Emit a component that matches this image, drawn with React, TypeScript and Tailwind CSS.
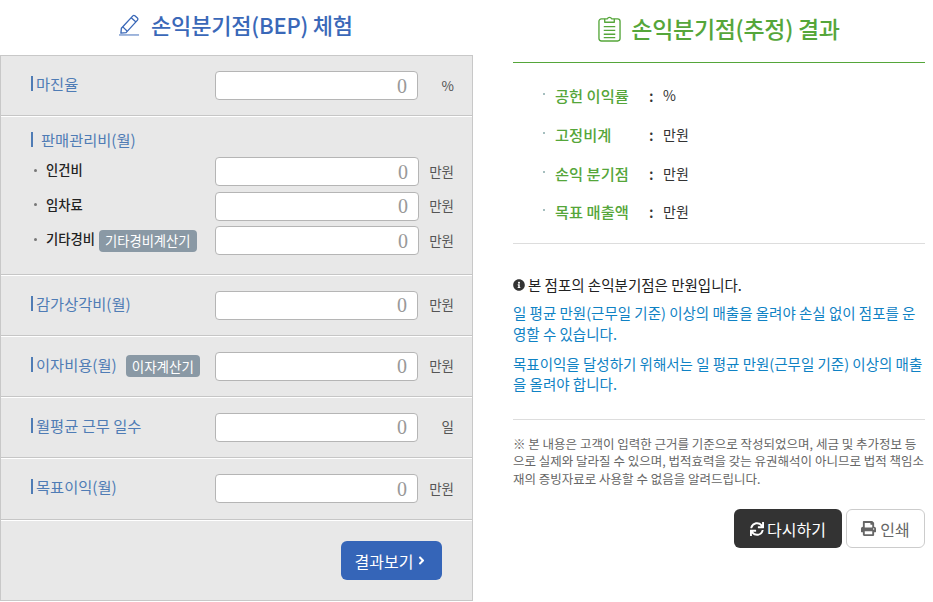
import { FaInfoCircle, FaPrint, FaSync, FaAngleRight } from "react-icons/fa";

const font = "font-['Noto_Sans_CJK_KR','Noto_Sans',sans-serif]";

function Amount({ unit, wide }: { unit: string; wide?: boolean }) {
  return (
    <div className="flex items-center">
      <div
        className={
          "flex h-[29px] items-center justify-end rounded-[4px] border border-[#b5b5b5] bg-white pr-[10px] font-['Liberation_Serif',serif] text-[20px] text-[#999] " +
          (wide ? "w-[204px]" : "w-[203px]")
        }
      >
        0
      </div>
      <span className="ml-auto text-[13.5px] leading-none text-[#555]">{unit}</span>
    </div>
  );
}

function SectionRow({
  label,
  unit,
  button,
  last,
  height,
}: {
  label: string;
  unit: string;
  button?: string;
  last?: boolean;
  height: string;
}) {
  return (
    <div
      className={
        "flex items-center pl-[30px] pr-[18px] " +
        height +
        (last ? "" : " border-b border-b-[#c6c6c6] shadow-[0_1px_0_#fff]")
      }
    >
      <div className="flex w-[184px] items-center">
        <span className="mb-[4px] flex items-center border-l-2 border-[#4f7cb5] pl-[3px] text-[15.3px] leading-[15px] text-[#4f7cb5]">
          {label}
        </span>
        {button && (
          <span className="ml-[9px] rounded-[4px] bg-[#8a99a5] px-[6px] py-[2px] text-[13.5px] leading-[18px] text-white">
            {button}
          </span>
        )}
      </div>
      <div className="flex-1">
        <Amount unit={unit} />
      </div>
    </div>
  );
}

function SubRow({ label, button }: { label: string; button?: string }) {
  return (
    <div className="flex items-center">
      <div className="flex w-[184px] items-center pl-[3px]">
        <span className="mb-[3px] mr-[9px] h-[3px] w-[3px] rounded-full bg-[#777]" />
        <span className="mb-[3px] text-[13.3px] font-medium leading-[18px] text-[#222]">{label}</span>
        {button && (
          <span className="ml-[4px] rounded-[4px] bg-[#8a99a5] px-[6px] py-[1px] text-[13.3px] leading-[20px] text-white">
            {button}
          </span>
        )}
      </div>
      <div className="flex-1">
        <Amount unit="만원" wide />
      </div>
    </div>
  );
}

function ResultRow({ label, value }: { label: string; value: string }) {
  return (
    <div className="flex h-[38.7px] items-center text-[15.3px]">
      <span className="mb-[3px] mr-[10px] h-[2px] w-[2px] rounded-full bg-[#8aa]" />
      <span className="w-[94px] font-medium text-[#55a63a]">{label}</span>
      <span className="w-[14px] font-medium text-[#333]">:</span>
      <span className="text-[14px] text-[#333]">{value}</span>
    </div>
  );
}

export default function App() {
  return (
    <div className={"flex h-[602px] w-[933px] overflow-hidden bg-white " + font}>
      {/* input form */}
      <div className="w-[473px] shrink-0">
        <h2 className="flex h-[55px] items-center justify-center gap-[11px] pb-[7px] pr-[1px] text-[22px] font-medium tracking-[-0.2px] text-[#3a68b8]">
          <svg viewBox="0 0 22 24" className="h-[24px] w-[21px]" fill="none" stroke="currentColor" strokeWidth="1.4" strokeLinejoin="round">
            <path d="M2.5 16.5 14.5 3.5a1.5 1.5 0 0 1 2.1-.1l2.7 2.4a1.5 1.5 0 0 1 .1 2.1L7.4 21 2 21.500z" />
            <path d="M12.8 5.4l5 4.5M4 15l4.4 4.3" />
            <path d="M0 23.5h21" strokeWidth="1" />
          </svg>
          <span>손익분기점(BEP) 체험</span>
        </h2>
        <div className="h-[546px] border border-[#c8c8c8] bg-[#e8e8e8]">
          <SectionRow label="마진율" unit="%" height="h-[60px]" />
          <div className="h-[159px] border-b border-b-[#c6c6c6] pl-[30px] pr-[18px] pt-[16px] shadow-[0_1px_0_#fff]">
            <div className="mb-[10px] flex h-[15px] items-center border-l-2 border-[#4f7cb5] pl-[8px] text-[15.3px] leading-[15px] text-[#4f7cb5]">
              판매관리비(월)
            </div>
            <div className="flex flex-col gap-[5.5px]">
              <SubRow label="인건비" />
              <SubRow label="임차료" />
              <SubRow label="기타경비" button="기타경비계산기" />
            </div>
          </div>
          <SectionRow label="감가상각비(월)" unit="만원" height="h-[61px]" />
          <SectionRow label="이자비용(월)" unit="만원" button="이자계산기" height="h-[61px]" />
          <SectionRow label="월평균 근무 일수" unit="일" height="h-[61px]" />
          <SectionRow label="목표이익(월)" unit="만원" height="h-[62px]" />
          <div className="flex justify-end pr-[30px] pt-[21px]">
            <button className="flex h-[39px] w-[101px] items-center justify-center gap-[2px] rounded-[6px] bg-[#3565b8] text-[16px] text-white">
              결과보기
              <FaAngleRight className="text-[13px]" />
            </button>
          </div>
        </div>
      </div>

      {/* result */}
      <div className="ml-[40px] w-[412px] shrink-0">
        <h2 className="flex h-[63px] items-center justify-center gap-[10px] border-b border-[#55a63a] pb-[5px] text-[23px] font-medium tracking-[-0.3px] text-[#55a63a]">
          <svg viewBox="0 0 24 28" className="h-[27px] w-[23px]" fill="none" stroke="currentColor" strokeWidth="1.4" strokeLinejoin="round">
            <path d="M7 4H3.5A2.5 2.5 0 0 0 1 6.5v18A2.5 2.5 0 0 0 3.5 27h17a2.5 2.5 0 0 0 2.5-2.5v-18A2.5 2.5 0 0 0 20.5 4H17" />
            <path d="M7 7.5V4h2.8a2.3 2.3 0 0 1 4.4 0H17v3.5z" />
            <path d="M6 12h12M6 16h12M6 20h12M6 23.5h12" />
          </svg>
          <span>손익분기점(추정) 결과</span>
        </h2>
        <div className="border-b border-[#ddd] pb-[11.5px] pl-[30px] pt-[13.5px]">
          <ResultRow label="공헌 이익률" value="%" />
          <ResultRow label="고정비계" value="만원" />
          <ResultRow label="손익 분기점" value="만원" />
          <ResultRow label="목표 매출액" value="만원" />
        </div>
        <div className="break-all border-b border-[#ddd] pb-[24px] pt-[31px] text-[14.5px] leading-[20.5px]">
          <p className="mb-[8px] flex items-center gap-[3px] text-[#222]">
            <FaInfoCircle className="text-[12px] text-[#333]" />
            본 점포의 손익분기점은 만원입니다.
          </p>
          <p className="mb-[9.5px] text-[#0f82c4]">
            일 평균 만원(근무일 기준) 이상의 매출을 올려야 손실 없이 점포를 운영할 수 있습니다.
          </p>
          <p className="text-[#0f82c4]">
            목표이익을 달성하기 위해서는 일 평균 만원(근무일 기준) 이상의 매출을 올려야 합니다.
          </p>
        </div>
        <p className="break-all pt-[15px] text-[12.5px] leading-[17.5px] text-[#666]">
          ※ 본 내용은 고객이 입력한 근거를 기준으로 작성되었으며, 세금 및 추가정보 등으로 실제와 달라질 수 있으며, 법적효력을 갖는 유권해석이 아니므로 법적 책임소재의 증빙자료로 사용할 수 없음을 알려드립니다.
        </p>
        <div className="flex justify-end gap-[4px] pt-[22px]">
          <button className="flex h-[39px] w-[108px] items-center justify-center gap-[3px] rounded-[6px] bg-[#333] text-[16px] text-white">
            <FaSync className="text-[14px]" />
            다시하기
          </button>
          <button className="flex h-[39px] w-[79px] items-center justify-center gap-[4px] rounded-[6px] border border-[#ccc] bg-white text-[16px] text-[#666]">
            <FaPrint className="text-[15px]" />
            인쇄
          </button>
        </div>
      </div>
    </div>
  );
}
